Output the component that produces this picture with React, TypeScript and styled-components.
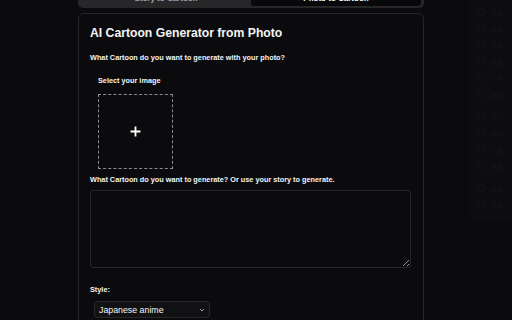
import styled, { createGlobalStyle } from "styled-components";

const GlobalStyle = createGlobalStyle`
    html, body {
        margin: 0;
        padding: 0;
        background: #0b0b0d;
        overflow: hidden;
    }
    body {
        font-family: "Liberation Sans", Arial, "Noto Sans CJK SC", sans-serif;
        color: #f4f4f5;
    }
`;

const Page = styled.div`
    position: relative;
    width: 512px;
    height: 320px;
    overflow: hidden;
    padding-left: 78px;
    box-sizing: border-box;
`;

const Column = styled.div`
    width: 346px;
    display: flex;
    flex-direction: column;
`;

const Tabs = styled.div`
    display: flex;
    margin-top: -13px;
    height: 21px;
    padding: 3px 3px 2px;
    box-sizing: border-box;
    background: #27272a;
    border-radius: 5px;
`;

const Tab = styled.div<{ active?: boolean }>`
    flex: 1;
    display: flex;
    align-items: center;
    justify-content: center;
    font-size: 8px;
    font-weight: 700;
    border-radius: 3px;
    background: ${p => (p.active ? "#09090b" : "transparent")};
    color: ${p => (p.active ? "#fafafa" : "#a1a1aa")};
`;

const Card = styled.div`
    margin-top: 5px;
    border: 1px solid #27272a;
    border-radius: 6px;
    padding: 10px 12px 40px 11px;
    min-height: 320px;
    display: flex;
    flex-direction: column;
`;

const Title = styled.h1`
    margin: 0;
    font-size: 12.2px;
    font-weight: 700;
    line-height: 18px;
`;

const Label = styled.div<{ indent?: number; top?: number }>`
    font-size: 7.3px;
    font-weight: 700;
    line-height: 10px;
    margin-top: ${p => p.top ?? 0}px;
    padding-left: ${p => p.indent ?? 0}px;
    color: #f4f4f5;
`;

const Upload = styled.div`
    margin: 8px 0 0 8px;
    width: 75px;
    height: 75px;
    box-sizing: border-box;
    border: 1px dashed #8b8b92;
    display: flex;
    align-items: center;
    justify-content: center;
`;

const TextArea = styled.textarea`
    margin-top: 5px;
    width: 321px;
    height: 78px;
    box-sizing: border-box;
    background: #0b0b0d;
    border: 1px solid #27272a;
    border-radius: 3px;
    color: #fafafa;
    resize: vertical;
    outline: none;
`;

const Select = styled.div`
    margin: 6px 0 0 4px;
    width: 116px;
    height: 17px;
    box-sizing: border-box;
    border: 1px solid #27272a;
    border-radius: 3px;
    background: #111113;
    display: flex;
    align-items: center;
    justify-content: space-between;
    padding: 0 4px;
    font-size: 8.8px;
    color: #f4f4f5;
`;

const Ghost = styled.div`
    position: absolute;
    left: 470px;
    top: -6px;
    width: 42px;
    height: 226px;
    background: #0d0d10;
    border-radius: 6px 0 0 6px;
    padding-top: 10px;
    box-sizing: border-box;
    overflow: hidden;
`;

const GhostItem = styled.div<{ gap?: number }>`
    display: flex;
    align-items: center;
    gap: 6px;
    height: 16.6px;
    margin-top: ${p => p.gap ?? 0}px;
    padding-left: 7px;
    font-size: 6px;
    white-space: nowrap;
    color: #151518;
`;

const GhostIcon = styled.span`
    flex: none;
    width: 6px;
    height: 6px;
    border: 1px solid #151518;
    border-radius: 50%;
`;

const ghostItems = ["总结", "翻译", "下载", "截屏", "打开", "收藏", "打印", "阅读", "识图", "搜索", "设置", "帮助"];

export default function App() {
    return (
        <Page>
            <GlobalStyle />
            <Column>
                <Tabs>
                    <Tab>Story to Cartoon</Tab>
                    <Tab active>Photo to Cartoon</Tab>
                </Tabs>
                <Card>
                    <Title>AI Cartoon Generator from Photo</Title>
                    <Label top={11}>What Cartoon do you want to generate with your photo?</Label>
                    <Label top={13} indent={8}>Select your image</Label>
                    <Upload>
                        <svg width="11" height="11" viewBox="0 0 11 11">
                            <path d="M5.5 0.5v10M0.5 5.5h10" stroke="#fff" strokeWidth="1.8" />
                        </svg>
                    </Upload>
                    <Label top={6}>What Cartoon do you want to generate? Or use your story to generate.</Label>
                    <TextArea />
                    <Label top={17}>Style:</Label>
                    <Select>
                        <span>Japanese anime</span>
                        <svg width="6" height="6" viewBox="0 0 6 6">
                            <path d="M1 2l2 2 2-2" stroke="#a1a1aa" strokeWidth="0.9" fill="none" />
                        </svg>
                    </Select>
                </Card>
            </Column>
            <Ghost>
                {ghostItems.map((t, i) => (
                    <GhostItem key={t} gap={i === 6 || i === 10 ? 5 : 0}>
                        <GhostIcon />
                        {t}
                    </GhostItem>
                ))}
            </Ghost>
        </Page>
    );
}
